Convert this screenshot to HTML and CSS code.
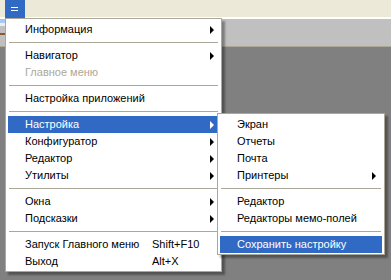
FILE: index.html
```html
<!DOCTYPE html>
<html lang="ru">
<head>
  <meta charset="UTF-8">
  <title>Меню</title>
  <link rel="stylesheet" href="styles.css">
</head>
<body>
  <div class="topbar">
    <div class="menu-btn">
      <svg width="20" height="18" viewBox="0 0 20 18"><rect x="6" y="7" width="7" height="1" fill="#fff"/><rect x="6" y="10" width="7" height="1" fill="#fff"/></svg>
    </div>
  </div>
  <div class="toolbar">
    <div class="tool-edge"></div>
  </div>
  <div class="workspace"></div>

  <div class="menu main-menu">
    <div class="item sub">Информация</div>
    <div class="sep"></div>
    <div class="item sub">Навигатор</div>
    <div class="item disabled">Главное меню</div>
    <div class="sep"></div>
    <div class="item">Настройка приложений</div>
    <div class="sep"></div>
    <div class="item sub active">Настройка</div>
    <div class="item sub">Конфигуратор</div>
    <div class="item sub">Редактор</div>
    <div class="item sub">Утилиты</div>
    <div class="sep"></div>
    <div class="item sub">Окна</div>
    <div class="item sub">Подсказки</div>
    <div class="sep"></div>
    <div class="item"><span class="label">Запуск Главного меню</span><span class="key">Shift+F10</span></div>
    <div class="item"><span class="label">Выход</span><span class="key">Alt+X</span></div>
  </div>

  <div class="menu sub-menu">
    <div class="item">Экран</div>
    <div class="item">Отчеты</div>
    <div class="item">Почта</div>
    <div class="item sub">Принтеры</div>
    <div class="sep"></div>
    <div class="item">Редактор</div>
    <div class="item">Редакторы мемо-полей</div>
    <div class="sep"></div>
    <div class="item active">Сохранить настройку</div>
  </div>
</body>
</html>
```
FILE: styles.css
```css
body {
  margin: 0;
  width: 391px;
  height: 280px;
  overflow: hidden;
  background: #808080;
  font-family: 'Liberation Sans', Arial, sans-serif;
  font-size: 11px;
  position: relative;
}
.topbar {
  height: 17px;
  background: #ece9d8;
  border-bottom: 2px solid #fff;
  padding-left: 5px;
}
.menu-btn {
  width: 20px;
  height: 18px;
  background: #316ac5;
}
.menu-btn svg {
  display: block;
}
.toolbar {
  height: 26px;
  background: #c0c0c0;
  border-bottom: 1px solid #aca899;
  padding-top: 1px;
}
.tool-edge {
  width: 5px;
  height: 16px;
  background: linear-gradient(#a9c8ec 0, #a9c8ec 3px, #e8eef8 3px, #e8eef8 6px, #c0c0c0 6px, #c0c0c0 13px, #8a5a2e 13px, #8a5a2e 15px, #c0c0c0 15px);
}
.workspace {
  height: 200px;
}

/* --- menus --- */
.menu {
  position: absolute;
  background: #fff;
  border: 1px solid #aca899;
  padding: 2px 2px 1px 2px;
  box-shadow: 3px 3px 2px rgba(0, 0, 0, 0.35);
}
.main-menu {
  left: 5px;
  top: 18px;
  width: 211px;
}
.sub-menu {
  left: 217px;
  top: 113px;
  width: 162px;
}
.item {
  height: 17px;
  line-height: 17px;
  padding: 0 8px 0 17px;
  color: #000;
  white-space: nowrap;
  display: flex;
  position: relative;
}
.item.disabled {
  color: #aca899;
}
.item.active {
  background: #316ac5;
  color: #fff;
}
.item.sub::after {
  content: "";
  position: absolute;
  right: 5px;
  top: 5px;
  border-left: 4px solid #000;
  border-top: 4px solid transparent;
  border-bottom: 4px solid transparent;
}
.item.sub.active::after {
  border-left-color: #fff;
}
.sub-menu .item.sub::after {
  right: 6px;
}
.label {
  width: 127px;
}
.sep {
  height: 1px;
  background: #aca899;
  margin: 4px 1px;
}
```
